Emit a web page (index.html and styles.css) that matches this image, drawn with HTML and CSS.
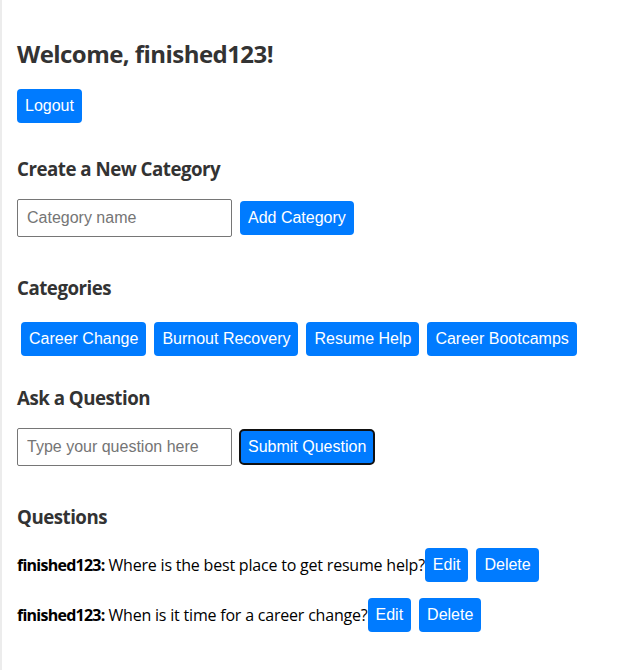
FILE: index.html
```html
<!DOCTYPE html>
<html lang="en">
<head>
<meta charset="utf-8">
<title>Dashboard</title>
<link rel="stylesheet" href="styles.css">
</head>
<body>
<div class="page">
  <h2 class="welcome">Welcome, finished123!</h2>
  <button class="btn">Logout</button>

  <h3 class="section-title">Create a New Category</h3>
  <form class="inline-form">
    <input class="text-input" type="text" placeholder="Category name">
    <button class="btn" type="button">Add Category</button>
  </form>

  <h3 class="section-title">Categories</h3>
  <div class="category-list">
    <button class="btn cat-btn">Career Change</button>
    <button class="btn cat-btn">Burnout Recovery</button>
    <button class="btn cat-btn">Resume Help</button>
    <button class="btn cat-btn">Career Bootcamps</button>
  </div>

  <h3 class="section-title ask">Ask a Question</h3>
  <form class="inline-form">
    <input class="text-input" type="text" placeholder="Type your question here">
    <button class="btn btn-focused" type="button">Submit Question</button>
  </form>

  <h3 class="section-title">Questions</h3>
  <div class="question-list">
    <div class="question"><span class="q-text"><strong>finished123:</strong> Where is the best place to get resume help?</span><button class="btn">Edit</button><button class="btn btn-delete">Delete</button></div>
    <div class="question"><span class="q-text"><strong>finished123:</strong> When is it time for a career change?</span><button class="btn">Edit</button><button class="btn btn-delete">Delete</button></div>
  </div>
</div>
</body>
</html>
```

FILE: styles.css
```css
html, body {
  margin: 0;
  padding: 0;
  background: #fff;
}

.page {
  min-height: 670px;
  box-sizing: border-box;
  border-left: 2px solid #ececec;
  padding: 38px 15px 20px;
  font-family: "Open Sans", "Noto Sans", sans-serif;
  color: #333;
}

.welcome {
  font-size: 24px;
  line-height: 32px;
  font-weight: 700;
  letter-spacing: -0.55px;
  margin: 0 0 19px;
}

.section-title {
  font-size: 18.72px;
  line-height: 24px;
  font-weight: 700;
  letter-spacing: -0.5px;
  margin: 34px 0 18px;
}

.btn {
  font-family: "Liberation Sans", Arial, sans-serif;
  font-size: 16px;
  line-height: 18px;
  letter-spacing: 0;
  padding: 8px;
  border: none;
  border-radius: 4px;
  background: #007bff;
  color: #fff;
  cursor: pointer;
}

.inline-form {
  display: flex;
  align-items: center;
  gap: 8px;
  margin: 0;
}

.text-input {
  box-sizing: border-box;
  width: 215px;
  height: 38px;
  padding: 9px;
  border: 1px solid #767676;
  border-radius: 2px;
  font-family: "Liberation Sans", Arial, sans-serif;
  font-size: 16px;
  color: #333;
}

.text-input::placeholder {
  color: #757575;
}

.inline-form + .section-title {
  margin-top: 39px;
}

.category-list {
  display: flex;
  flex-wrap: wrap;
  margin: 18px 0 0;
}

.cat-btn {
  margin: 4px;
}

.section-title.ask {
  margin-top: 26px;
}

.btn-focused {
  outline: 2px solid #111;
  outline-offset: -1px;
}

.question-list {
  display: flex;
  flex-direction: column;
  gap: 16px;
  padding-top: 1px;
}

.question {
  display: flex;
  align-items: center;
  color: #000;
  font-size: 16px;
}

.q-text {
  letter-spacing: -0.2px;
}

.q-text strong {
  font-weight: 700;
  letter-spacing: -0.75px;
}

.btn-delete {
  margin-left: 8px;
}
```
